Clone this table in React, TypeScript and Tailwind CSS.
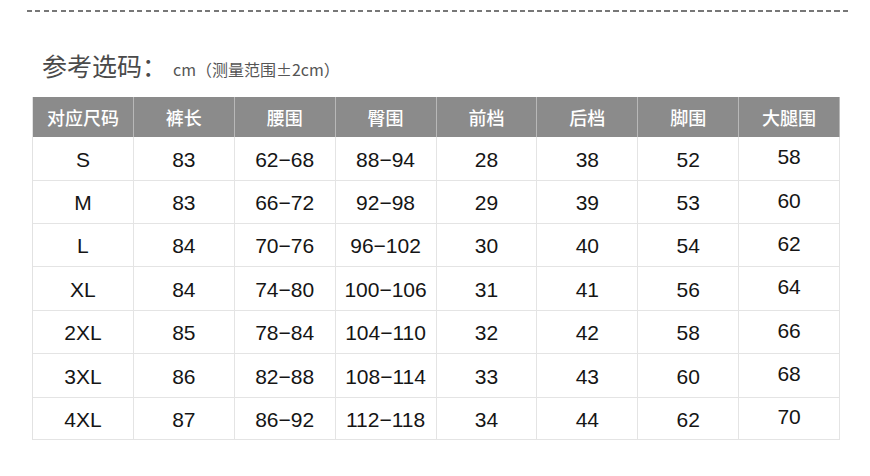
import React from "react";

const headers = ["对应尺码", "裤长", "腰围", "臀围", "前档", "后档", "脚围", "大腿围"];
const rows: string[][] = [
  ["S", "83", "62−68", "88−94", "28", "38", "52", "58"],
  ["M", "83", "66−72", "92−98", "29", "39", "53", "60"],
  ["L", "84", "70−76", "96−102", "30", "40", "54", "62"],
  ["XL", "84", "74−80", "100−106", "31", "41", "56", "64"],
  ["2XL", "85", "78−84", "104−110", "32", "42", "58", "66"],
  ["3XL", "86", "82−88", "108−114", "33", "43", "60", "68"],
  ["4XL", "87", "86−92", "112−118", "34", "44", "62", "70"],
];
const rowH = ["h-[44px]", "h-[43px]", "h-[43px]", "h-[44px]", "h-[43px]", "h-[44px]", "h-[42px]"];

export default function App() {
  return (
    <div className="w-[870px] h-[476px] bg-white overflow-hidden flex flex-col">
      <div className="mt-[10px] ml-[27px] w-[824px] h-[2px] bg-[repeating-linear-gradient(90deg,#777_0px,#777_5px,transparent_5px,transparent_8.5px)]" />
      <div
        className="ml-[42px] mt-[38px] flex items-baseline text-[#4a4a4a]"
        style={{ fontFamily: '"Noto Sans CJK SC", "Noto Sans", sans-serif' }}
      >
        <span className="text-[25px] leading-[30px]">参考选码：</span>
        <span className="ml-[6px] text-[16px] text-[#555]">cm（测量范围±2cm）</span>
      </div>
      <div className="ml-[32px] mt-[16px] w-[808px] border-l border-[#e2e2e2]">
        <div
          className="grid grid-cols-8 h-[40px] bg-[#8b8b8b] text-white"
          style={{ fontFamily: '"Noto Sans CJK SC", "Noto Sans", sans-serif' }}
        >
          {headers.map((h, i) => (
            <div
              key={i}
              className="flex items-center justify-center border-r border-[#b8b8b8] text-[18px] font-medium"
            >
              {h}
            </div>
          ))}
        </div>
        {rows.map((r, ri) => (
          <div
            key={ri}
            className={`grid grid-cols-8 ${rowH[ri]} text-[#151515]`}
            style={{ fontFamily: '"Liberation Sans", Arial, sans-serif' }}
          >
            {r.map((c, ci) => (
              <div
                key={ci}
                className={`flex items-center justify-center border-r border-b border-[#e4e4e4] text-[21px] ${ci === 7 ? "pb-[3px]" : "pt-[2px]"}`}
              >
                {c}
              </div>
            ))}
          </div>
        ))}
      </div>
    </div>
  );
}
